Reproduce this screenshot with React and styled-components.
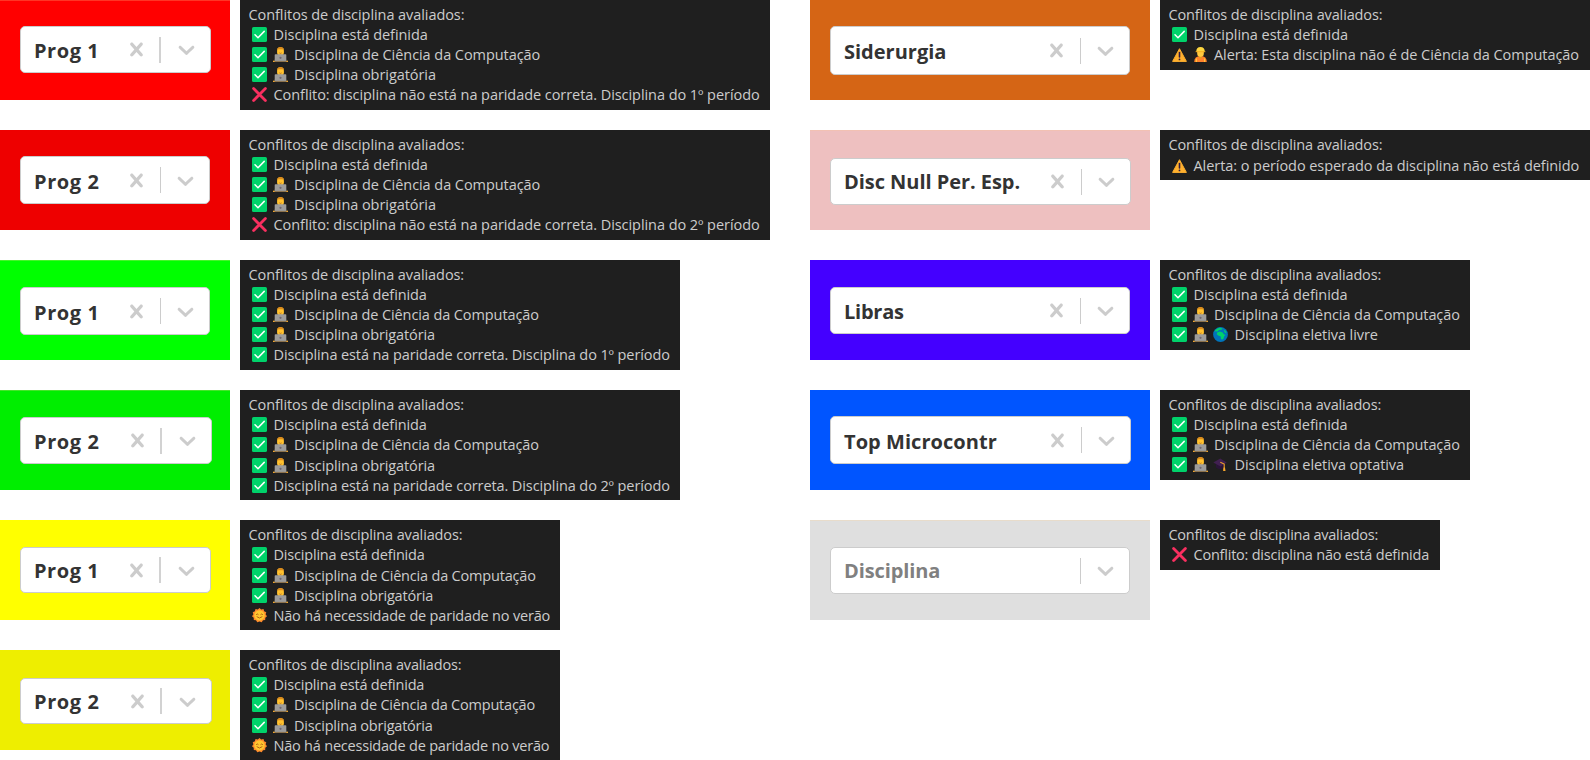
import React from "react";
import styled, { createGlobalStyle } from "styled-components";

const GlobalStyle = createGlobalStyle`
  body {
    margin: 0;
    background: #fff;
    font-family: "Open Sans", "Noto Sans", sans-serif;
  }
`;

const Page = styled.main`
  display: grid;
  grid-template-columns: 810px 780px;
  width: 1590px;
  height: 760px;
  overflow: hidden;
`;

const Column = styled.section`
  display: grid;
  grid-auto-rows: 100px;
  align-content: start;
  row-gap: 30px;
`;

const Example = styled.article`
  display: flex;
  align-items: flex-start;
  gap: 10px;
`;

const Swatch = styled.div`
  box-sizing: border-box;
  flex: none;
  width: ${(p) => p.$width}px;
  height: 100px;
  padding: ${(p) => p.$top}px 0 0 20px;
  background: ${(p) => p.$color};
  border-top: 1px solid ${(p) => p.$edge || p.$color};
`;

const Control = styled.div`
  box-sizing: border-box;
  display: flex;
  align-items: center;
  width: ${(p) => p.$width}px;
  height: ${(p) => p.$height}px;
  padding-left: 13px;
  border: 1px solid #ccc;
  border-radius: 5px;
  background: #fff;
`;

const Value = styled.span`
  flex: 1;
  margin-top: ${(p) => p.$drop}px;
  color: ${(p) => (p.$placeholder ? "#808080" : "#333")};
  font-size: 20px;
  font-weight: 700;
  line-height: 28px;
  letter-spacing: ${(p) => p.$spacing}px;
  white-space: nowrap;
`;

const Indicator = styled.span`
  display: flex;
  justify-content: center;
  width: ${(p) => (p.$wide ? 48 : 47)}px;
  color: #ccc;
`;

const Separator = styled.span`
  width: ${(p) => p.$width}px;
  height: 26px;
  margin-left: ${(p) => (p.$width > 1 ? -1 : 0)}px;
  margin-right: ${(p) => (p.$width > 1 ? 1 : 0)}px;
  background: ${(p) => (p.$width > 1 ? "#d2d2d2" : "#ccc")};
`;

const Tooltip = styled.div`
  box-sizing: border-box;
  flex: none;
  width: ${(p) => p.$width}px;
  height: ${(p) => p.$height}px;
  padding: 5px 0 0 9px;
  background: #1f1f1f;
  color: #ccc;
  font-size: 14.5px;
  line-height: ${(p) => p.$line}px;
  letter-spacing: ${(p) => p.$spacing}px;
  white-space: nowrap;
`;

const Title = styled.div`
  height: ${(p) => p.$line}px;
  margin-left: -0.5px;
  letter-spacing: ${(p) => p.$spacing}px;
`;

const Check = styled.div`
  display: flex;
  align-items: center;
  gap: 5.5px;
  height: ${(p) => p.$line}px;
  padding-left: 3px;
`;

const Message = styled.span`
  margin-left: 1px;
`;

const Glyph = styled.svg`
  display: block;
  flex: none;
  width: ${(p) => p.$size || 15}px;
  height: ${(p) => p.$size || 15}px;
`;

const Emoji = styled(Glyph)`
  margin-top: -1px;
`;

const CrossIcon = () => (
  <Glyph $size={27} viewBox="0 0 20 20" fill="currentColor">
    <path d="M14.348 14.849c-0.469 0.469-1.229 0.469-1.697 0l-2.651-3.030-2.651 3.029c-0.469 0.469-1.229 0.469-1.697 0-0.469-0.469-0.469-1.229 0-1.697l2.758-3.15-2.759-3.152c-0.469-0.469-0.469-1.228 0-1.697s1.228-0.469 1.697 0l2.652 3.031 2.651-3.031c0.469-0.469 1.228-0.469 1.697 0s0.469 1.229 0 1.697l-2.758 3.152 2.758 3.15c0.469 0.469 0.469 1.229 0 1.698z" />
  </Glyph>
);

const ChevronIcon = () => (
  <Glyph $size={27} viewBox="0 0 20 20" fill="currentColor">
    <path d="M4.516 7.548c0.436-0.446 1.043-0.481 1.576 0l3.908 3.747 3.908-3.747c0.533-0.481 1.141-0.446 1.574 0 0.436 0.445 0.408 1.197 0 1.615-0.406 0.418-4.695 4.502-4.695 4.502-0.217 0.223-0.502 0.335-0.787 0.335s-0.57-0.112-0.789-0.335c0 0-4.287-4.084-4.695-4.502s-0.436-1.17 0-1.615z" />
  </Glyph>
);

const icons = {
  ok: (
    <>
      <rect width="15" height="15" rx="1.6" fill="#00d26a" />
      <path d="M3 7.8L6 10.7L12.2 4.4" fill="none" stroke="#fff" strokeWidth="1.5" strokeLinecap="round" strokeLinejoin="round" />
    </>
  ),
  error: (
    <path d="M1.6 1.6L13.4 13.4M13.4 1.6L1.6 13.4" stroke="#f92f60" strokeWidth="2.8" strokeLinecap="round" />
  ),
  warning: (
    <>
      <path d="M7.5 1.7L14.4 14.4H0.6Z" fill="#ffb02e" stroke="#ffb02e" strokeWidth="1" strokeLinejoin="round" />
      <path d="M7.5 5.6V10" stroke="#321b41" strokeWidth="1.6" strokeLinecap="round" />
      <circle cx="7.5" cy="12.4" r="0.9" fill="#321b41" />
    </>
  ),
  coder: (
    <>
      <path d="M1.5 15C1.5 10.5 4 8 7.5 8S13.5 10.5 13.5 15Z" fill="#636363" />
      <rect x="4.1" y="0.2" width="6.8" height="8.2" rx="3.2" fill="#ffc12e" />
      <path d="M4.1 3.5Q4 0 7.5 0T10.9 3.5L9.6 2.2H5.4Z" fill="#d98a1c" />
      <path d="M6.4 5.9Q7.5 6.9 8.6 5.9" fill="none" stroke="#9c5a24" strokeWidth="0.7" />
      <rect x="1.7" y="7.2" width="11.6" height="7.4" rx="0.8" fill="#9b9b9b" />
      <circle cx="7.5" cy="10.8" r="1.1" fill="#6d6672" />
      <rect x="0" y="13.9" width="15" height="1.1" fill="#8c7350" />
      <rect x="0" y="13.7" width="1.6" height="1.3" fill="#f2a62c" />
      <rect x="13.4" y="13.7" width="1.6" height="1.3" fill="#f2a62c" />
    </>
  ),
  worker: (
    <>
      <path d="M1.2 15Q1.2 9.2 7.5 9T13.8 15Z" fill="#ff822d" />
      <path d="M6 9.2H9L8.5 11.4H6.5Z" fill="#e39d1d" />
      <path d="M3.4 11.5V15M11.6 11.5V15" stroke="#ffce3a" strokeWidth="1" />
      <rect x="4.2" y="2.2" width="6.6" height="7.6" rx="3" fill="#ffc93e" />
      <path d="M3.2 4.8Q3.2 0 7.5 0T11.8 4.8Z" fill="#fcd53f" />
      <path d="M3 4.7H12" stroke="#f3a91f" strokeWidth="0.9" strokeLinecap="round" />
    </>
  ),
  globe: (
    <>
      <circle cx="7.5" cy="7.5" r="7.4" fill="#0074ba" />
      <path d="M1.4 4.2L3.6 2L6.4 0.8L9.6 1.4L9 2.6L6 3L4.6 4.4Z" fill="#00d26a" />
      <path d="M4.2 5.6L6.8 4.6L9.6 5.4L11 7.4L12.6 7.8L11 9.6L10.6 11.6L9 12.8L7.8 11.4V9.4L5.2 8.6L3.8 7.2Z" fill="#00d26a" />
      <path d="M10.6 2.6L12.6 4L13.6 6.2L11.8 5.6Z" fill="#00d26a" />
    </>
  ),
  cap: (
    <>
      <path d="M3 7V10.5Q7 13.8 10.6 10.8V7Z" fill="#2a1438" />
      <path d="M0.3 5.4L7.3 1.6L13.7 5.5L7.6 9.4Z" fill="#402050" />
      <path d="M7.3 5.3L11.2 7V13.2" fill="none" stroke="#f3a12b" strokeWidth="1.1" />
      <path d="M10.6 10.4H12L12.5 14H10.1Z" fill="#f9a72e" />
    </>
  ),
  sun: (
    <>
      <path d="M7.5 0L9.2 1.6L11.5 1L12.1 3.3L14.3 4.2L13.6 6.3L15 8.2L13.3 9.7L13.2 12L11 12.3L9.7 14.3L7.5 13.4L5.3 14.3L4 12.3L1.8 12L1.7 9.7L0 8.2L1.4 6.3L0.7 4.2L2.9 3.3L3.5 1L5.8 1.6Z" fill="#ff8a2d" />
      <circle cx="7.5" cy="7.4" r="5.2" fill="#ffc62f" />
      <path d="M4.4 6.4Q5.3 5.3 6.2 6.4M8.8 6.4Q9.7 5.3 10.6 6.4M5 8.9Q7.5 11.4 10 8.9" fill="none" stroke="#a04a12" strokeWidth="0.8" strokeLinecap="round" />
    </>
  ),
};

const defined = { icons: ["ok"], text: "Disciplina está definida" };
const computing = { icons: ["ok", "coder"], text: "Disciplina de Ciência da Computação" };
const mandatory = { icons: ["ok", "coder"], text: "Disciplina obrigatória" };
const summer = { icons: ["sun"], text: "Não há necessidade de paridade no verão" };
const wrongParity = (n) => ({
  icons: ["error"],
  text: `Conflito: disciplina não está na paridade correta. Disciplina do ${n}º período`,
});
const rightParity = (n) => ({
  icons: ["ok"],
  text: `Disciplina está na paridade correta. Disciplina do ${n}º período`,
});

// tip: width, height, line height, message tracking, title tracking
const required = [
  { name: "Prog 1", spacing: 0.55, color: "#ff0000", edge: "#ff3525", top: 25, box: [191, 47], sep: 2, tip: [530, 110, 20, -0.06, -0.07], checks: [defined, computing, mandatory, wrongParity(1)] },
  { name: "Prog 2", spacing: 0.6, drop: 3, color: "#ee0000", top: 25, box: [190, 48], sep: 1, tip: [530, 110, 20, -0.06, -0.07], checks: [defined, computing, mandatory, wrongParity(2)] },
  { name: "Prog 1", spacing: 0.6, drop: 3, color: "#00ff00", edge: "#45f52a", top: 26, box: [190, 48], sep: 1, tip: [440, 110, 20, -0.1, -0.08], checks: [defined, computing, mandatory, rightParity(1)] },
  { name: "Prog 2", spacing: 0.6, color: "#00ee00", edge: "#45e52a", top: 26, box: [192, 47], sep: 2, tip: [440, 110, 20.2, -0.1, -0.08], checks: [defined, computing, mandatory, rightParity(2)] },
  { name: "Prog 1", spacing: 0.55, drop: 1, color: "#ffff00", top: 26, box: [191, 46], sep: 2, tip: [320, 110, 20.3, -0.19, -0.13], checks: [defined, computing, mandatory, summer] },
  { name: "Prog 2", spacing: 0.6, color: "#eeee00", top: 27, box: [192, 46], sep: 2, tip: [320, 110, 20.2, -0.21, -0.16], checks: [defined, computing, mandatory, summer] },
];

const others = [
  {
    name: "Siderurgia", drop: 3, color: "#d56515", top: 25, box: [300, 49], sep: 1, tip: [430, 70, 20, -0.05, -0.13],
    checks: [defined, { icons: ["warning", "worker"], text: "Alerta: Esta disciplina não é de Ciência da Computação" }],
  },
  {
    name: "Disc Null Per. Esp.", spacing: -0.05, drop: 1, color: "#eec0c0", edge: "#f2c1b3", top: 27, box: [301, 47], sep: 1, tip: [430, 50, 20.5, -0.06, -0.13],
    checks: [{ icons: ["warning"], text: "Alerta: o período esperado da disciplina não está definido" }],
  },
  {
    name: "Libras", spacing: -0.25, color: "#4400ff", top: 26, box: [300, 47], sep: 1, tip: [310, 90, 20, -0.07, -0.17],
    checks: [defined, computing, { icons: ["ok", "coder", "globe"], text: "Disciplina eletiva livre" }],
  },
  {
    name: "Top Microcontr", spacing: 0.05, drop: 3, color: "#0055ff", top: 25, box: [301, 48], sep: 1, tip: [310, 90, 20, -0.07, -0.17],
    checks: [defined, computing, { icons: ["ok", "coder", "cap"], text: "Disciplina eletiva optativa" }],
  },
  {
    name: "Disciplina", spacing: -0.1, drop: 1, placeholder: true, color: "#dfdfdf", edge: "#e8dccb", top: 26, box: [300, 47], sep: 1, tip: [280, 50, 20, -0.22, -0.26],
    checks: [{ icons: ["error"], text: "Conflito: disciplina não está definida" }],
  },
];

function DisciplineExample({ item, width }) {
  const [tipWidth, tipHeight, line, spacing, titleSpacing] = item.tip;
  return (
    <Example>
      <Swatch $width={width} $top={item.top} $color={item.color} $edge={item.edge}>
        <Control $width={item.box[0]} $height={item.box[1]}>
          <Value $placeholder={item.placeholder} $spacing={item.spacing || 0} $drop={item.drop || 2}>
            {item.name}
          </Value>
          {!item.placeholder && (
            <Indicator>
              <CrossIcon />
            </Indicator>
          )}
          <Separator $width={item.sep} />
          <Indicator $wide>
            <ChevronIcon />
          </Indicator>
        </Control>
      </Swatch>
      <Tooltip $width={tipWidth} $height={tipHeight} $line={line} $spacing={spacing}>
        <Title $line={line} $spacing={titleSpacing}>Conflitos de disciplina avaliados:</Title>
        {item.checks.map((check) => (
          <Check key={check.text} $line={line}>
            {check.icons.map((name) => (
              <Emoji key={name} viewBox="0 0 15 15">{icons[name]}</Emoji>
            ))}
            <Message>{check.text}</Message>
          </Check>
        ))}
      </Tooltip>
    </Example>
  );
}

export default function App() {
  return (
    <>
      <GlobalStyle />
      <Page>
        <Column>
          {required.map((item, i) => (
            <DisciplineExample key={i} item={item} width={230} />
          ))}
        </Column>
        <Column>
          {others.map((item, i) => (
            <DisciplineExample key={i} item={item} width={340} />
          ))}
        </Column>
      </Page>
    </>
  );
}
